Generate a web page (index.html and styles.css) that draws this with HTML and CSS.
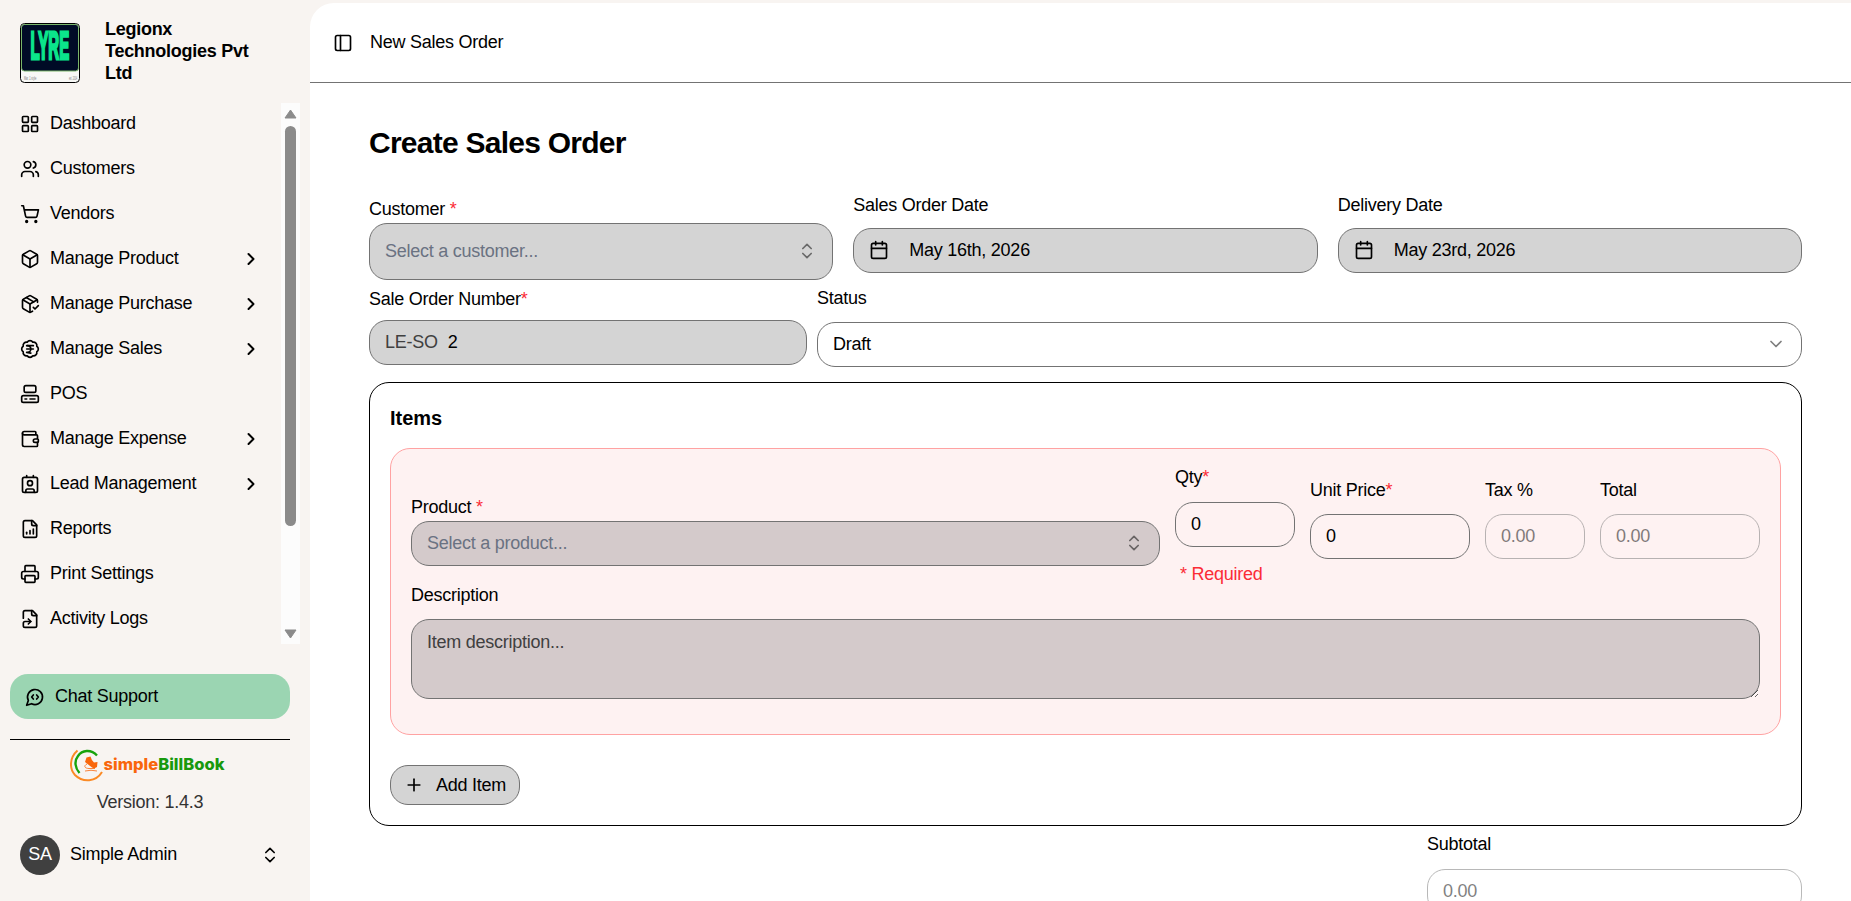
FILE: index.html
```html
<!DOCTYPE html>
<html lang="en">
<head>
    <meta charset="UTF-8">
    <meta name="viewport" content="width=device-width, initial-scale=1.0">
    <title>New Sales Order</title>
    <link rel="stylesheet" href="styles.css">
</head>
<body>
    <div class="app">
        <!-- Sidebar -->
        <aside class="sidebar">
            <div class="company">
                <svg class="company-logo" viewBox="0 0 60 60">
                    <rect x="0.5" y="0.5" width="59" height="59" rx="4" fill="#f8f8f6" stroke="#000"/>
                    <rect x="1.5" y="1.5" width="57" height="46.5" rx="3" fill="#000b26" stroke="#79b56a"/>
                    <text transform="translate(10.5 35.5) scale(0.385 1)" font-size="39" class="logo-word">LYRE</text>
                    <text transform="translate(4 57) scale(0.48 1)" font-size="5" class="logo-small">Mar. 1 style</text>
                    <text transform="translate(49 57) scale(0.4 1)" font-size="5" class="logo-small">est. 2014</text>
                </svg>
                <div class="company-name">Legionx Technologies Pvt Ltd</div>
            </div>

            <div class="menu-wrap">
                <nav class="menu">
                    <a class="menu-item"><svg class="icon" viewBox="0 0 24 24"><rect width="7" height="7" x="3" y="3" rx="1"/><rect width="7" height="7" x="14" y="3" rx="1"/><rect width="7" height="7" x="14" y="14" rx="1"/><rect width="7" height="7" x="3" y="14" rx="1"/></svg><span>Dashboard</span></a>
                    <a class="menu-item"><svg class="icon" viewBox="0 0 24 24"><path d="M16 21v-2a4 4 0 0 0-4-4H6a4 4 0 0 0-4 4v2"/><circle cx="9" cy="7" r="4"/><path d="M22 21v-2a4 4 0 0 0-3-3.87"/><path d="M16 3.13a4 4 0 0 1 0 7.75"/></svg><span>Customers</span></a>
                    <a class="menu-item"><svg class="icon" viewBox="0 0 24 24"><circle cx="8" cy="21" r="1"/><circle cx="19" cy="21" r="1"/><path d="M2.05 2.05h2l2.66 12.42a2 2 0 0 0 2 1.58h9.78a2 2 0 0 0 1.95-1.57l1.65-7.43H5.12"/></svg><span>Vendors</span></a>
                    <a class="menu-item"><svg class="icon" viewBox="0 0 24 24"><path d="M21 8a2 2 0 0 0-1-1.73l-7-4a2 2 0 0 0-2 0l-7 4A2 2 0 0 0 3 8v8a2 2 0 0 0 1 1.73l7 4a2 2 0 0 0 2 0l7-4A2 2 0 0 0 21 16Z"/><path d="m3.3 7 8.7 5 8.7-5"/><path d="M12 22V12"/></svg><span>Manage Product</span><svg class="icon chevron" viewBox="0 0 24 24"><path d="m9 18 6-6-6-6"/></svg></a>
                    <a class="menu-item"><svg class="icon" viewBox="0 0 24 24"><path d="m16 16 2 2 4-4"/><path d="M21 10V8a2 2 0 0 0-1-1.73l-7-4a2 2 0 0 0-2 0l-7 4A2 2 0 0 0 3 8v8a2 2 0 0 0 1 1.73l7 4a2 2 0 0 0 2 0l2-1.14"/><path d="m7.5 4.27 9 5.15"/><path d="M3.29 7 12 12l8.71-5"/><path d="M12 22V12"/></svg><span>Manage Purchase</span><svg class="icon chevron" viewBox="0 0 24 24"><path d="m9 18 6-6-6-6"/></svg></a>
                    <a class="menu-item"><svg class="icon" viewBox="0 0 24 24"><path d="M3.85 8.62a4 4 0 0 1 4.78-4.77 4 4 0 0 1 6.74 0 4 4 0 0 1 4.78 4.78 4 4 0 0 1 0 6.74 4 4 0 0 1-4.77 4.78 4 4 0 0 1-6.75 0 4 4 0 0 1-4.78-4.77 4 4 0 0 1 0-6.76Z"/><path d="M8 8h8"/><path d="M8 12h8"/><path d="m13 17-5-1h1a4 4 0 0 0 0-8"/></svg><span>Manage Sales</span><svg class="icon chevron" viewBox="0 0 24 24"><path d="m9 18 6-6-6-6"/></svg></a>
                    <a class="menu-item"><svg class="icon" viewBox="0 0 24 24"><rect width="14" height="8" x="5" y="2" rx="2"/><rect width="20" height="8" x="2" y="14" rx="2"/><path d="M6 18h2"/><path d="M12 18h6"/></svg><span>POS</span></a>
                    <a class="menu-item"><svg class="icon" viewBox="0 0 24 24"><path d="M19 7V4a1 1 0 0 0-1-1H5a2 2 0 0 0 0 4h15a1 1 0 0 1 1 1v4h-3a2 2 0 0 0 0 4h3a1 1 0 0 0 1-1v-2a1 1 0 0 0-1-1"/><path d="M3 5v14a2 2 0 0 0 2 2h15a1 1 0 0 0 1-1v-4"/></svg><span>Manage Expense</span><svg class="icon chevron" viewBox="0 0 24 24"><path d="m9 18 6-6-6-6"/></svg></a>
                    <a class="menu-item"><svg class="icon" viewBox="0 0 24 24"><path d="M16 2v2"/><path d="M7 22v-2a2 2 0 0 1 2-2h6a2 2 0 0 1 2 2v2"/><path d="M8 2v2"/><circle cx="12" cy="11" r="3"/><rect x="3" y="4" width="18" height="18" rx="2"/></svg><span>Lead Management</span><svg class="icon chevron" viewBox="0 0 24 24"><path d="m9 18 6-6-6-6"/></svg></a>
                    <a class="menu-item"><svg class="icon" viewBox="0 0 24 24"><path d="M15 2H6a2 2 0 0 0-2 2v16a2 2 0 0 0 2 2h12a2 2 0 0 0 2-2V7Z"/><path d="M14 2v4a2 2 0 0 0 2 2h4"/><path d="M8 18v-2"/><path d="M12 18v-4"/><path d="M16 18v-6"/></svg><span>Reports</span></a>
                    <a class="menu-item"><svg class="icon" viewBox="0 0 24 24"><path d="M6 18H4a2 2 0 0 1-2-2v-5a2 2 0 0 1 2-2h16a2 2 0 0 1 2 2v5a2 2 0 0 1-2 2h-2"/><path d="M6 9V3a1 1 0 0 1 1-1h10a1 1 0 0 1 1 1v6"/><rect x="6" y="14" width="12" height="8" rx="1"/></svg><span>Print Settings</span></a>
                    <a class="menu-item"><svg class="icon" viewBox="0 0 24 24"><path d="m10 18 3-3-3-3"/><path d="M14 2v4a2 2 0 0 0 2 2h4"/><path d="M4 11V4a2 2 0 0 1 2-2h9l5 5v13a2 2 0 0 1-2 2H6a2 2 0 0 1-2-2v-3a2 2 0 0 1 2-2h7"/></svg><span>Activity Logs</span></a>
                </nav>
                <div class="scrollbar">
                    <svg class="arrow" viewBox="0 0 13 10"><path d="M6.5 1 12 9H1Z"/></svg>
                    <div class="thumb"></div>
                    <svg class="arrow" viewBox="0 0 13 10"><path d="M6.5 9 12 1H1Z"/></svg>
                </div>
            </div>

            <a class="chat"><svg class="icon" viewBox="0 0 24 24"><path d="M10 9.5 8 12l2 2.5"/><path d="m14 9.5 2 2.5-2 2.5"/><path d="M7.9 20A9 9 0 1 0 4 16.1L2 22Z"/></svg><span>Chat Support</span></a>

            <div class="brand">
                <svg class="brand-logo" viewBox="0 0 156 34">
                    <path d="M7.500 1.500C-1 9-.5 20 5 26c8 8 21 7 27-3" fill="none" stroke="#fb8a25" stroke-width="2"/>
                    <path d="M27 6.500C21 0 12 1 8 7c-4 5-3 12 1.500 17" fill="none" stroke="#18a30d" stroke-width="2.4"/>
                    <path d="m16.500 8.500 4-1q1 4 3.500 6l3.500-.500-.500 5q-2.500 2-5 .5l-7-5.500Z" fill="#f9660b"/>
                    <path d="M17 15c-4 2-2 4.500 2 4.500h6M15 22q6-1.500 12 0" fill="none" stroke="#f9660b" stroke-width="0.8"/>
                    <text x="33.5" y="21" font-size="15.5" textLength="121" lengthAdjust="spacingAndGlyphs" class="brand-text">simple<tspan fill="#18990d">BillBook</tspan></text>
                </svg>
                <div class="version">Version: 1.4.3</div>
            </div>

            <div class="user">
                <div class="avatar">SA</div>
                <span>Simple Admin</span>
                <svg class="icon" viewBox="0 0 24 24"><path d="m7 15 5 5 5-5"/><path d="m7 9 5-5 5 5"/></svg>
            </div>
        </aside>

        <main class="main">
            <header class="topbar">
                <svg class="icon" viewBox="0 0 24 24"><rect width="18" height="18" x="3" y="3" rx="2"/><path d="M9 3v18"/></svg>
                <span>New Sales Order</span>
            </header>

            <div class="content">
                <h1>Create Sales Order</h1>

                <!-- Customer and dates -->
                <div class="row-dates">
                    <div class="field field-customer">
                        <label>Customer <span class="req">*</span></label>
                        <button class="control filled select tall">
                            <span class="muted">Select a customer...</span>
                            <svg class="icon faded" viewBox="0 0 24 24"><path d="m7 15 5 5 5-5"/><path d="m7 9 5-5 5 5"/></svg>
                        </button>
                    </div>
                    <div class="field">
                        <label>Sales Order Date</label>
                        <button class="control filled date"><svg class="icon" viewBox="0 0 24 24"><path d="M8 2v4"/><path d="M16 2v4"/><rect width="18" height="18" x="3" y="4" rx="2"/><path d="M3 10h18"/></svg>May 16th, 2026</button>
                    </div>
                    <div class="field">
                        <label>Delivery Date</label>
                        <button class="control filled date"><svg class="icon" viewBox="0 0 24 24"><path d="M8 2v4"/><path d="M16 2v4"/><rect width="18" height="18" x="3" y="4" rx="2"/><path d="M3 10h18"/></svg>May 23rd, 2026</button>
                    </div>
                </div>

                <!-- Number and status -->
                <div class="row-number">
                    <div class="field field-number">
                        <label>Sale Order Number<span class="req">*</span></label>
                        <div class="control filled number"><span class="prefix">LE-SO</span><span>2</span></div>
                    </div>
                    <div class="field field-status">
                        <label>Status</label>
                        <button class="control select">
                            <span>Draft</span>
                            <svg class="icon faded" viewBox="0 0 24 24"><path d="m6 9 6 6 6-6"/></svg>
                        </button>
                    </div>
                </div>

                <section class="items">
                    <h2>Items</h2>
                    <div class="item-card">
                        <div class="item-row">
                            <div class="field field-product">
                                <label>Product <span class="req">*</span></label>
                                <button class="control filled-pink select">
                                    <span class="muted">Select a product...</span>
                                    <svg class="icon faded" viewBox="0 0 24 24"><path d="m7 15 5 5 5-5"/><path d="m7 9 5-5 5 5"/></svg>
                                </button>
                            </div>
                            <div class="field field-qty">
                                <label>Qty<span class="req">*</span></label>
                                <input class="control" type="text" value="0">
                                <p class="error">* Required</p>
                            </div>
                            <div class="field field-price">
                                <label>Unit Price<span class="req">*</span></label>
                                <input class="control" type="text" value="0">
                            </div>
                            <div class="field field-tax">
                                <label>Tax %</label>
                                <input class="control readonly" type="text" value="0.00" readonly>
                            </div>
                            <div class="field field-price">
                                <label>Total</label>
                                <input class="control readonly" type="text" value="0.00" readonly>
                            </div>
                        </div>
                        <div class="field">
                            <label>Description</label>
                            <textarea class="control filled-pink" placeholder="Item description..."></textarea>
                        </div>
                    </div>
                    <button class="control filled add"><svg class="icon" viewBox="0 0 24 24"><path d="M5 12h14"/><path d="M12 5v14"/></svg>Add Item</button>
                </section>

                <div class="field subtotal">
                    <label>Subtotal</label>
                    <input class="control readonly" type="text" value="0.00" readonly>
                </div>
            </div>
        </main>
    </div>
</body>
</html>
```
FILE: styles.css
```css
* {
    box-sizing: border-box;
}

body {
    margin: 0;
    font-family: "Liberation Sans", Arial, sans-serif;
    font-size: 18px;
    line-height: 20px;
    letter-spacing: -0.014em;
    color: #000;
    background-color: #f8f4f1;
    overflow: hidden;
}

.app {
    display: flex;
    height: 100vh;
}

.icon {
    width: 20px;
    height: 20px;
    flex-shrink: 0;
    fill: none;
    stroke: currentColor;
    stroke-width: 2;
    stroke-linecap: round;
    stroke-linejoin: round;
}

.faded {
    opacity: 0.5;
}

/* Sidebar */
.sidebar {
    width: 310px;
    flex-shrink: 0;
    display: flex;
    flex-direction: column;
}

.company {
    display: flex;
    gap: 25px;
    height: 103px;
    padding: 18px 20px 0;
}

.company-logo {
    width: 60px;
    height: 60px;
    margin-top: 5px;
    flex-shrink: 0;
}

.logo-word {
    font-weight: bold;
    fill: #0be58b;
    stroke: #0be58b;
    stroke-width: 3;
    letter-spacing: 0;
}

.logo-small {
    fill: #777;
    letter-spacing: 0;
}

.company-name {
    width: 160px;
    font-weight: bold;
    line-height: 22px;
    letter-spacing: -0.015em;
}

.menu-wrap {
    display: flex;
    height: 541px;
}

.menu {
    width: 281px;
    padding: 0 20px;
}

.menu-item {
    display: flex;
    align-items: center;
    gap: 10px;
    height: 45px;
    margin-top: -2px;
    margin-bottom: 2px;
}

.menu-item span {
    flex: 1;
    margin-top: -2px;
}

.chevron {
    stroke-width: 2.4;
}

.scrollbar {
    display: flex;
    flex-direction: column;
    align-items: center;
    width: 19px;
    padding: 6px 0 5px;
    background-color: #fcfcfc;
}

.arrow {
    width: 13px;
    height: 10px;
    fill: #8b8b8b;
    stroke: #8b8b8b;
    stroke-linejoin: round;
}

.thumb {
    width: 11px;
    height: 400px;
    margin: 7px 0 auto;
    border-radius: 6px;
    background-color: #8b8b8b;
}

.chat {
    display: flex;
    align-items: center;
    gap: 10px;
    height: 45px;
    margin: 30px 20px 0 10px;
    padding: 0 15px;
    border-radius: 18px;
    background-color: #9bd5b2;
}

.chat .icon {
    margin-top: 1px;
}

.chat span {
    margin-top: -2px;
}

.brand {
    height: 96px;
    margin: 20px 20px 0 10px;
    padding-top: 9px;
    border-top: 1px solid #000;
    text-align: center;
}

.brand-logo {
    display: block;
    width: 156px;
    height: 34px;
    margin-left: 60px;
}

.brand-text {
    font-family: Inter, sans-serif;
    font-weight: 800;
    letter-spacing: 0;
    fill: #f9660b;
}

.version {
    margin-top: 9px;
    color: #333;
}

.user {
    display: flex;
    align-items: center;
    gap: 10px;
    padding: 0 30px 0 20px;
}

.user span {
    flex: 1;
    margin-top: -2px;
}

.avatar {
    width: 40px;
    height: 40px;
    border-radius: 50%;
    background-color: #404040;
    color: #fff;
    line-height: 39px;
    text-align: center;
}

/* Main area */
.main {
    flex: 1;
    margin-top: 3px;
    border-radius: 24px 0 0 0;
    background-color: #fff;
    overflow: hidden;
}

.topbar {
    display: flex;
    align-items: center;
    gap: 17px;
    height: 80px;
    padding: 0 23px;
    border-bottom: 1px solid #737373;
}

.topbar span {
    margin-top: -2px;
}

.content {
    padding: 42px 49px 0 59px;
}

h1 {
    margin: 0 0 34px;
    font-size: 30px;
    line-height: 36px;
    letter-spacing: -0.025em;
}

h2 {
    margin: 1px 0 16px;
    font-size: 20px;
    line-height: 28px;
    letter-spacing: 0;
}

.field {
    display: flex;
    flex-direction: column;
    gap: 14px;
}

.req {
    color: #fb2c36;
}

.control {
    display: flex;
    align-items: center;
    width: 100%;
    height: 45px;
    padding: 0 15px 1px;
    border: 1px solid #737373;
    border-radius: 18px;
    background-color: transparent;
    font: inherit;
    letter-spacing: inherit;
    color: #000;
}

.filled {
    background-color: #d4d4d4;
}

.filled-pink {
    background-color: #d4cacb;
}

.select {
    justify-content: space-between;
}

.muted {
    color: #6a7282;
}

.row-dates {
    display: grid;
    grid-template-columns: repeat(3, 1fr);
    gap: 20px;
}

.row-dates .field {
    gap: 13px;
}

.row-dates .field-customer {
    padding-top: 4px;
    gap: 4px;
}

.tall {
    height: 57px;
}

.date {
    gap: 20px;
}

.row-number {
    display: flex;
    gap: 10px;
    margin-top: 8px;
}

.field-number {
    width: 438px;
    padding-top: 1px;
    gap: 11px;
}

.field-status {
    flex: 1;
}

.number {
    gap: 10px;
}

.prefix {
    color: #404040;
}

.items {
    height: 444px;
    margin-top: 15px;
    padding: 20px;
    border: 1px solid #000;
    border-radius: 20px;
}

.item-card {
    height: 287px;
    padding: 18px 20px 0;
    border: 1px solid #ffa2a2;
    border-radius: 20px;
    background-color: #fef2f2;
}

.item-row {
    display: flex;
    gap: 15px;
    height: 118px;
}

.item-row .field-product {
    flex: 1;
    padding-top: 30px;
    gap: 4px;
}

.field-qty {
    width: 120px;
}

.item-row .field-qty {
    gap: 15px;
}

.field-price {
    width: 160px;
    padding-top: 13px;
}

.field-tax {
    width: 100px;
    padding-top: 13px;
}

.error {
    margin: 2px 0 0 5px;
    color: #fb2c36;
}

.readonly {
    opacity: 0.5;
}

textarea.control {
    height: 80px;
    padding: 12px 15px;
}

textarea::placeholder {
    color: #404040;
}

.add {
    width: 130px;
    height: 40px;
    margin-top: 30px;
    padding: 0 13px 1px;
    gap: 12px;
    white-space: nowrap;
}

.subtotal {
    width: 375px;
    margin: 8px 0 0 auto;
    gap: 15px;
}
```
